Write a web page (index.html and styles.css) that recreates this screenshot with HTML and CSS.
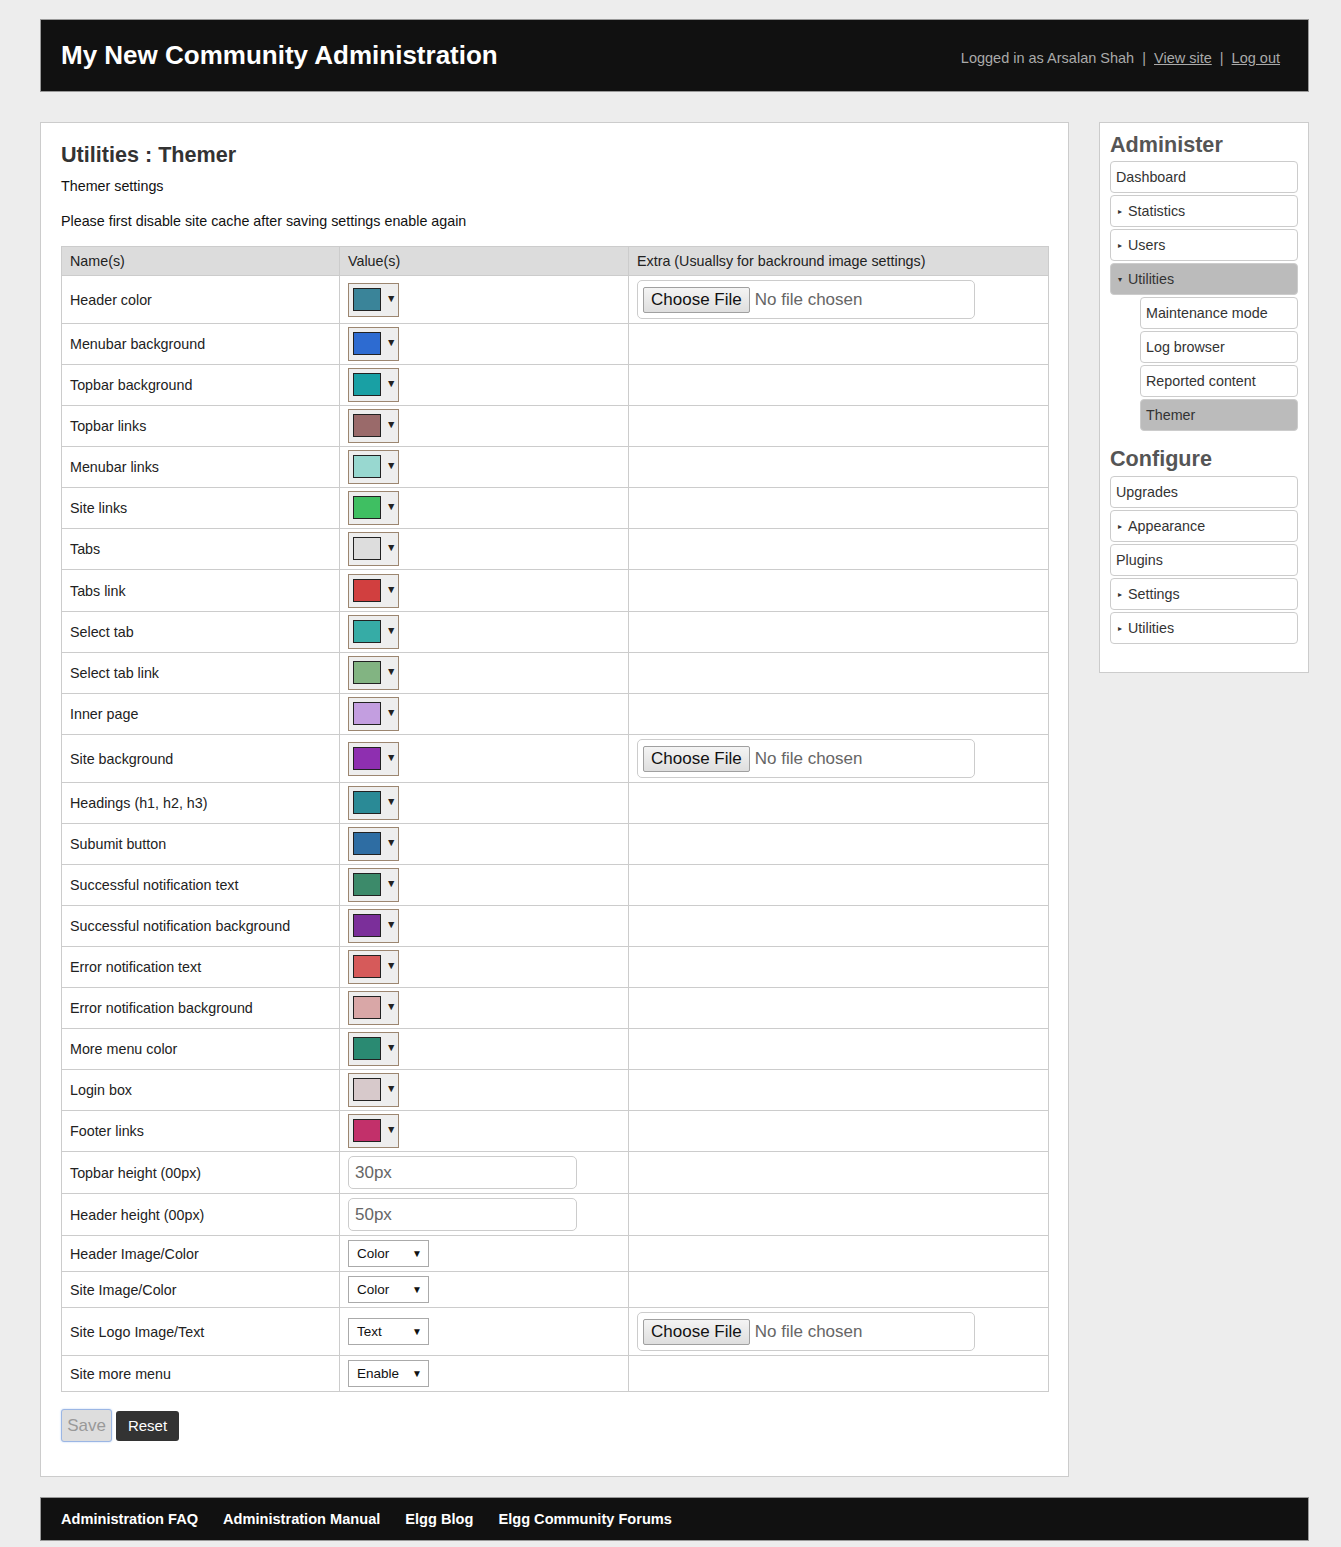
FILE: index.html
```html
<!DOCTYPE html>
<html lang="en">
<head>
<meta charset="utf-8">
<title>My New Community Administration</title>
<link rel="stylesheet" href="styles.css">
</head>
<body>
<div class="page">
  <header class="topbar">
    <h1 class="site-title">My New Community Administration</h1>
    <div class="user-links">Logged in as Arsalan Shah <span class="sep">|</span> <a href="#">View site</a> <span class="sep">|</span> <a href="#">Log out</a></div>
  </header>

  <div class="layout">
    <main class="main">
      <h2 class="page-title">Utilities : Themer</h2>
      <p class="lead">Themer settings</p>
      <p class="note">Please first disable site cache after saving settings enable again</p>

      <table class="settings">
        <colgroup><col class="c1"><col class="c2"><col class="c3"></colgroup>
        <thead>
          <tr><th>Name(s)</th><th>Value(s)</th><th>Extra (Usuallsy for backround image settings)</th></tr>
        </thead>
        <tbody>
          <tr class="tall"><td>Header color</td><td><span class="picker"><span class="swatch" style="background:#3a8499"></span><span class="caret">&#9660;</span></span></td><td><div class="file"><span class="file-btn">Choose File</span><span class="file-txt">No file chosen</span></div></td></tr>
          <tr><td>Menubar background</td><td><span class="picker"><span class="swatch" style="background:#2d6bd1"></span><span class="caret">&#9660;</span></span></td><td></td></tr>
          <tr><td>Topbar background</td><td><span class="picker"><span class="swatch" style="background:#19a0a4"></span><span class="caret">&#9660;</span></span></td><td></td></tr>
          <tr><td>Topbar links</td><td><span class="picker"><span class="swatch" style="background:#9a6a6a"></span><span class="caret">&#9660;</span></span></td><td></td></tr>
          <tr><td>Menubar links</td><td><span class="picker"><span class="swatch" style="background:#98d8d0"></span><span class="caret">&#9660;</span></span></td><td></td></tr>
          <tr><td>Site links</td><td><span class="picker"><span class="swatch" style="background:#3fbf62"></span><span class="caret">&#9660;</span></span></td><td></td></tr>
          <tr><td>Tabs</td><td><span class="picker"><span class="swatch" style="background:#dddddd"></span><span class="caret">&#9660;</span></span></td><td></td></tr>
          <tr class="mid"><td>Tabs link</td><td><span class="picker"><span class="swatch" style="background:#d13f3f"></span><span class="caret">&#9660;</span></span></td><td></td></tr>
          <tr><td>Select tab</td><td><span class="picker"><span class="swatch" style="background:#36aca6"></span><span class="caret">&#9660;</span></span></td><td></td></tr>
          <tr><td>Select tab link</td><td><span class="picker"><span class="swatch" style="background:#82b482"></span><span class="caret">&#9660;</span></span></td><td></td></tr>
          <tr><td>Inner page</td><td><span class="picker"><span class="swatch" style="background:#c39ee0"></span><span class="caret">&#9660;</span></span></td><td></td></tr>
          <tr class="tall2"><td>Site background</td><td><span class="picker"><span class="swatch" style="background:#8e2fb0"></span><span class="caret">&#9660;</span></span></td><td><div class="file"><span class="file-btn">Choose File</span><span class="file-txt">No file chosen</span></div></td></tr>
          <tr><td>Headings (h1, h2, h3)</td><td><span class="picker"><span class="swatch" style="background:#2a8a96"></span><span class="caret">&#9660;</span></span></td><td></td></tr>
          <tr><td>Subumit button</td><td><span class="picker"><span class="swatch" style="background:#2e6da3"></span><span class="caret">&#9660;</span></span></td><td></td></tr>
          <tr><td>Successful notification text</td><td><span class="picker"><span class="swatch" style="background:#3c8a6a"></span><span class="caret">&#9660;</span></span></td><td></td></tr>
          <tr><td>Successful notification background</td><td><span class="picker"><span class="swatch" style="background:#7b2f9a"></span><span class="caret">&#9660;</span></span></td><td></td></tr>
          <tr><td>Error notification text</td><td><span class="picker"><span class="swatch" style="background:#d65a5a"></span><span class="caret">&#9660;</span></span></td><td></td></tr>
          <tr><td>Error notification background</td><td><span class="picker"><span class="swatch" style="background:#d9a7a7"></span><span class="caret">&#9660;</span></span></td><td></td></tr>
          <tr><td>More menu color</td><td><span class="picker"><span class="swatch" style="background:#2a8a72"></span><span class="caret">&#9660;</span></span></td><td></td></tr>
          <tr><td>Login box</td><td><span class="picker"><span class="swatch" style="background:#d7c9cb"></span><span class="caret">&#9660;</span></span></td><td></td></tr>
          <tr><td>Footer links</td><td><span class="picker"><span class="swatch" style="background:#c2306a"></span><span class="caret">&#9660;</span></span></td><td></td></tr>
          <tr class="mid"><td>Topbar height (00px)</td><td><input class="text-input" type="text" value="30px"></td><td></td></tr>
          <tr class="mid"><td>Header height (00px)</td><td><input class="text-input" type="text" value="50px"></td><td></td></tr>
          <tr class="short"><td>Header Image/Color</td><td><span class="dropdown"><span class="dd-label">Color</span><span class="dd-caret">&#9660;</span></span></td><td></td></tr>
          <tr class="short"><td>Site Image/Color</td><td><span class="dropdown"><span class="dd-label">Color</span><span class="dd-caret">&#9660;</span></span></td><td></td></tr>
          <tr class="tall"><td>Site Logo Image/Text</td><td><span class="dropdown"><span class="dd-label">Text</span><span class="dd-caret">&#9660;</span></span></td><td><div class="file"><span class="file-btn">Choose File</span><span class="file-txt">No file chosen</span></div></td></tr>
          <tr class="short"><td>Site more menu</td><td><span class="dropdown"><span class="dd-label">Enable</span><span class="dd-caret">&#9660;</span></span></td><td></td></tr>
        </tbody>
      </table>

      <div class="actions">
        <button class="btn-save" type="button">Save</button>
        <button class="btn-reset" type="button">Reset</button>
      </div>
    </main>

    <aside class="sidebar">
      <h3 class="side-title">Administer</h3>
      <ul class="menu">
        <li><a class="item" href="#">Dashboard</a></li>
        <li><a class="item" href="#"><span class="arrow">&#9656;</span>Statistics</a></li>
        <li><a class="item" href="#"><span class="arrow">&#9656;</span>Users</a></li>
        <li><a class="item selected" href="#"><span class="arrow">&#9662;</span>Utilities</a>
          <ul class="submenu">
            <li><a class="item" href="#">Maintenance mode</a></li>
            <li><a class="item" href="#">Log browser</a></li>
            <li><a class="item" href="#">Reported content</a></li>
            <li><a class="item selected" href="#">Themer</a></li>
          </ul>
        </li>
      </ul>
      <h3 class="side-title second">Configure</h3>
      <ul class="menu">
        <li><a class="item" href="#">Upgrades</a></li>
        <li><a class="item" href="#"><span class="arrow">&#9656;</span>Appearance</a></li>
        <li><a class="item" href="#">Plugins</a></li>
        <li><a class="item" href="#"><span class="arrow">&#9656;</span>Settings</a></li>
        <li><a class="item" href="#"><span class="arrow">&#9656;</span>Utilities</a></li>
      </ul>
    </aside>
  </div>

  <footer class="footer">
    <a href="#">Administration FAQ</a>
    <a href="#">Administration Manual</a>
    <a href="#">Elgg Blog</a>
    <a href="#">Elgg Community Forums</a>
  </footer>
</div>
</body>
</html>
```
FILE: styles.css
```css
* { box-sizing: border-box; }

body {
  margin: 0;
  background: #ededed;
  font-family: "Liberation Sans", Arial, sans-serif;
  font-size: 14.3px;
  color: #333;
}

.page {
  width: 1269px;
  margin-left: 40px;
  padding-top: 19px;
  padding-bottom: 7px;
}

/* Top bar */
.topbar {
  height: 73px;
  background: #111;
  border: 1px solid #999;
  display: flex;
  align-items: center;
  justify-content: space-between;
  padding: 0 28px 0 20px;
}
.site-title {
  margin: 0 0 2px;
  color: #fff;
  font-size: 26px;
  font-weight: bold;
  line-height: 30px;
}
.user-links {
  color: #aaa;
  font-size: 14.5px;
  padding-top: 4px;
}
.user-links a { color: #aaa; text-decoration: underline; }
.user-links .sep { margin: 0 4px; }

/* Layout */
.layout {
  display: flex;
  align-items: flex-start;
  gap: 30px;
  margin-top: 30px;
}

.main {
  width: 1029px;
  background: #fff;
  border: 1px solid #ccc;
  padding: 20px 20px 34px;
}
.page-title {
  margin: 0;
  font-size: 21.6px;
  line-height: 24px;
  font-weight: bold;
  color: #333;
}
.lead { margin: 10px 0 0; line-height: 18px; color: #111; }
.note { margin: 17px 0 0; line-height: 18px; color: #111; }

/* Table */
.settings {
  margin-top: 16px;
  width: 987px;
  border-collapse: collapse;
  table-layout: fixed;
}
.settings .c1 { width: 278px; }
.settings .c2 { width: 289px; }
.settings .c3 { width: 420px; }
.settings th, .settings td {
  border: 1px solid #ccc;
  padding: 3px 8px;
  text-align: left;
  vertical-align: middle;
  font-weight: normal;
  color: #222;
}
.settings th {
  background: #dcdcdc;
  padding: 6px 8px;
  line-height: 16px;
}
.settings td { height: 41px; }
.settings tr.mid td { height: 42px; }
.settings tr.tall td { height: 48px; }
.settings tr.tall2 td { height: 48px; }
.settings tr.short td { height: 36px; }
.settings tr.mid .picker { margin-top: 1px; }

/* Color picker */
.picker {
  display: inline-flex;
  align-items: flex-start;
  vertical-align: middle;
  width: 51px;
  height: 34px;
  border: 1px solid #9c8670;
  background: #eee;
  padding: 4px 0 0 4px;
}
.swatch {
  display: block;
  width: 28px;
  height: 23px;
  border: 1px solid #222;
}
.caret {
  font-size: 10.5px;
  line-height: 10px;
  margin: 5px 0 0 5px;
  color: #222;
}

/* File input */
.file {
  display: flex;
  align-items: center;
  width: 338px;
  height: 39px;
  border: 1px solid #ccc;
  border-radius: 5px;
  padding: 0 5px;
}
.file-btn {
  display: inline-block;
  height: 26px;
  line-height: 24px;
  padding: 0 7px;
  border: 1px solid #a0a0a0;
  border-radius: 2px;
  background: linear-gradient(#f4f4f4, #dedede);
  color: #111;
  font-size: 17px;
}
.file-txt {
  margin-left: 5px;
  font-size: 17px;
  color: #666;
}

/* Text input */
.text-input {
  display: block;
  width: 229px;
  height: 33px;
  border: 1px solid #ccc;
  border-radius: 5px;
  padding: 0 6px;
  font-family: "Liberation Sans", Arial, sans-serif;
  font-size: 17px;
  color: #666;
  background: #fff;
}

/* Dropdown */
.dropdown {
  display: flex;
  align-items: center;
  justify-content: space-between;
  width: 81px;
  height: 27px;
  border: 1px solid #aaa;
  background: #fff;
  padding: 0 6px 0 8px;
  font-size: 13.5px;
  color: #111;
}
.dd-caret { font-size: 10px; color: #111; }

/* Buttons */
.actions {
  margin-top: 17px;
  display: flex;
  align-items: center;
  gap: 4px;
}
.btn-save {
  width: 51px;
  height: 33px;
  border: 1px solid #9bb6e4;
  border-radius: 3px;
  background: #ddd;
  color: #999;
  font-family: "Liberation Sans", Arial, sans-serif;
  font-size: 17px;
  padding: 0;
  box-shadow: 0 0 2px #b6cdf2;
}
.btn-reset {
  width: 63px;
  height: 30px;
  border: none;
  border-radius: 3px;
  background: #333;
  color: #fff;
  font-family: "Liberation Sans", Arial, sans-serif;
  font-size: 15px;
  padding: 0;
}

/* Sidebar */
.sidebar {
  width: 210px;
  background: #fff;
  border: 1px solid #ccc;
  padding: 10px 10px 26px;
}
.side-title {
  margin: 0 0 4px;
  font-size: 21.6px;
  line-height: 24px;
  font-weight: bold;
  color: #555;
}
.side-title.second { margin-top: 16px; margin-bottom: 5px; }
.menu, .submenu {
  list-style: none;
  margin: 0;
  padding: 0;
}
.submenu { margin-left: 30px; }
.item {
  display: flex;
  align-items: center;
  height: 32px;
  margin-bottom: 2px;
  border: 1px solid #ccc;
  border-radius: 4px;
  padding: 0 5px;
  color: #333;
  text-decoration: none;
  font-size: 14.3px;
}
.item.selected { background: #bbb; }
.arrow {
  font-size: 8px;
  margin: 1px 6px 0 2px;
  color: #333;
}

/* Footer */
.footer {
  margin-top: 20px;
  height: 44px;
  background: #111;
  border: 1px solid #999;
  display: flex;
  align-items: center;
  gap: 25px;
  padding-left: 20px;
}
.footer a {
  color: #fff;
  text-decoration: none;
  font-weight: bold;
  font-size: 14.6px;
}
```
